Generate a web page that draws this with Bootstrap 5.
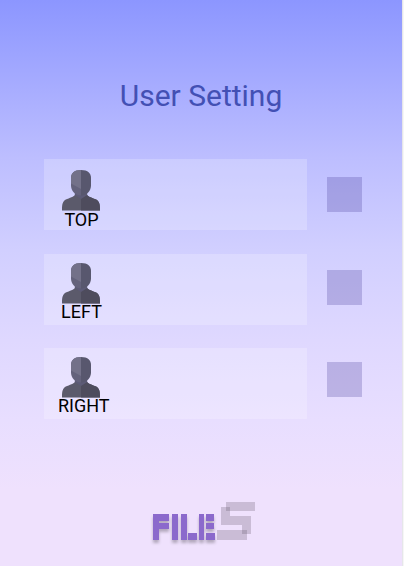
<!DOCTYPE html>
<html lang="en">
<head>
<meta charset="utf-8">
<meta name="viewport" content="width=device-width, initial-scale=1">
<title>User Setting</title>
<link href="https://cdn.jsdelivr.net/npm/bootstrap@5.3.0/dist/css/bootstrap.min.css" rel="stylesheet">
<style>
html { overflow: hidden; }
body { font-family: Roboto, "Liberation Sans", sans-serif; background: linear-gradient(90deg, #e6e6ea 403px, #f6f6f6 403px); }
.screen { width: 402px; height: 566px; padding-top: 75px; background: linear-gradient(180deg, #8c96ff 0, #a8adff 90px, #bdbeff 158px, #d1cfff 250px, #dfd8ff 340px, #e8deff 420px, #efe1fd 490px, #efe1fd 100%); }
.screen-title { font-size: 30px; line-height: 42px; color: #4350b4; font-weight: 400; }
.user-list { margin-top: 42px; padding-left: 44px; }
.user-row + .user-row { margin-top: 24px; }
.user-row + .user-row + .user-row { margin-top: 23px; }
.user-tile { width: 263px; height: 71px; background: rgba(255,255,255,.22); padding-left: 14px; }
.user-tile svg { margin-left: 4px; display: block; }
.user-row + .user-row .user-tile svg { margin-bottom: -1px; }
.user-label { font-size: 18px; line-height: 18px; color: #000; width: 47px; white-space: nowrap; }
.swatch { width: 35px; height: 35px; margin-left: 20px; background: rgba(68,58,150,.26); }
.logo { margin: 77px 0 0 145px; display: block; }
</style>
</head>
<body>
<svg width="0" height="0" class="position-absolute" aria-hidden="true">
  <symbol id="person" viewBox="0 0 38 41">
    <path fill="#5b5a6b" d="M0 40.500C0 34.500 .5 31.500 3.800 29.600 7.500 27.800 12 27 13.300 24.500h11.400C26 27 30.500 27.800 34.200 29.600 37.500 31.500 38 34.500 38 40.500Z"/>
    <path fill="#4e4c5d" d="M19 28 24.700 24.500C26 27 30.500 27.800 34.200 29.600 37.500 31.500 38 34.500 38 40.500H19Z"/>
    <path fill="#5c5a76" d="M12.800 19h12.400v6L19 29l-6.200-4Z"/>
    <path fill="#64627c" d="M19 0C12 0 9 3.500 9 8v7.500c0 4.500 3.500 10 10 10Z"/>
    <path fill="#58576e" d="M19 0c7 0 10 3.500 10 8v7.500c0 4.500-3.500 10-10 10Z"/>
    <path fill="#737189" d="M19 0C12 0 9 3.500 9 8v5.500L19 19Z"/>
  </symbol>
</svg>
<main class="screen d-flex flex-column">
  <h1 class="screen-title text-center mb-0">User Setting</h1>
  <section class="user-list d-flex flex-column">
    <div class="user-row d-flex align-items-start">
      <div class="user-tile" style="padding-top:11px"><svg width="38" height="41"><use href="#person"/></svg><div class="user-label text-center">TOP</div></div>
      <div class="swatch" style="margin-top:18px"></div>
    </div>
    <div class="user-row d-flex align-items-start">
      <div class="user-tile" style="padding-top:9px"><svg width="38" height="41"><use href="#person"/></svg><div class="user-label text-center">LEFT</div></div>
      <div class="swatch" style="margin-top:16px"></div>
    </div>
    <div class="user-row d-flex align-items-start">
      <div class="user-tile" style="padding-top:9px"><svg width="38" height="41"><use href="#person"/></svg><div class="user-label">RIGHT</div></div>
      <div class="swatch" style="margin-top:14px"></div>
    </div>
  </section>
  <svg class="logo" width="115" height="54" viewBox="145 496 115 54" role="img" aria-label="FILES">
    <defs><filter id="shade" x="-20%" y="-20%" width="140%" height="160%"><feDropShadow dx="0" dy="3" stdDeviation="1.500" flood-color="#000" flood-opacity=".25"/></filter></defs>
    <g fill="#8b69cc" filter="url(#shade)">
      <path d="M153 514h6v26h-6ZM159 514h10v7h-10ZM159 523h10v6h-10ZM172 514h6v26h-6ZM181 514h6v26h-6ZM188 533h9v7h-9ZM199 514h5v26h-5ZM206 514h8v7h-8ZM206 523h8v6h-8ZM206 533h9v7h-9Z"/>
    </g>
    <g fill="#60566a" fill-opacity=".26">
      <path d="M226 502h29v9h-29Z"/>
      <path d="M221 507h9v9h21v18h-9v-9h-21Z"/>
      <path d="M217 530h30v10h-30Z"/>
    </g>
  </svg>
</main>
<script src="https://cdn.jsdelivr.net/npm/bootstrap@5.3.0/dist/js/bootstrap.bundle.min.js"></script>
</body>
</html>
